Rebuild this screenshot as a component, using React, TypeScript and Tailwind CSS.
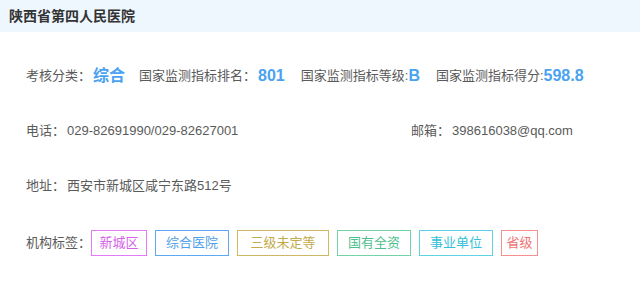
const tags = [
  { name: "新城区", w: "w-[56px]", cls: "border-[#e27cf4] text-[#d561e8]" },
  { name: "综合医院", w: "w-[74px]", cls: "border-[#5eaaf0] text-[#4f9fe9]" },
  { name: "三级未定等", w: "w-[92px]", cls: "border-[#cdb866] text-[#c2aa4c]" },
  { name: "国有全资", w: "w-[74px]", cls: "border-[#74d2a8] text-[#50bf8e]" },
  { name: "事业单位", w: "w-[74px]", cls: "border-[#62d2e6] text-[#33c0d8]" },
  { name: "省级", w: "w-[37px]", cls: "border-[#f39191] text-[#ef7474]" },
];

const App = () => {
  return (
    <div
      className="w-[640px] h-[289px] bg-white overflow-hidden"
      style={{ fontFamily: '"Liberation Sans", "Noto Sans CJK SC", sans-serif' }}
    >
      <div className="h-8 bg-[#eef6fe] flex items-center pl-[9px]">
        <span className="text-[14px] font-bold text-[#333]">陕西省第四人民医院</span>
      </div>

      <div className="pl-[26px] pt-[31px] flex flex-col gap-[29px] text-[13px] text-[#5a5a5a]">
        {/* 考核分类 */}
        <div className="h-[26px] flex items-center whitespace-nowrap">
          <span>考核分类：</span>
          <span className="ml-[2px] text-[16px] font-bold text-[#4aa2f1]">综合</span>
          <span className="ml-[14px]">国家监测指标排名：</span>
          <span className="ml-[2px] text-[16px] font-bold text-[#4aa2f1]">801</span>
          <span className="ml-[16px]">国家监测指标等级:</span>
          <span className="text-[16px] font-bold text-[#4aa2f1]">B</span>
          <span className="ml-[16px]">国家监测指标得分:</span>
          <span className="text-[16px] font-bold text-[#4aa2f1]">598.8</span>
        </div>

        {/* 联系方式 */}
        <div className="h-[26px] flex items-center whitespace-nowrap">
          <div className="w-[385px]">
            <span>电话：</span>
            <span className="ml-[2px]">029-82691990/029-82627001</span>
          </div>
          <div>
            <span>邮箱：</span>
            <span className="ml-[2px]">398616038@qq.com</span>
          </div>
        </div>

        {/* 地址 */}
        <div className="h-[26px] flex items-center whitespace-nowrap">
          <span>地址：</span>
          <span className="ml-[2px]">西安市新城区咸宁东路512号</span>
        </div>

        {/* 机构标签 */}
        <div className="h-[26px] mt-[2px] flex items-center whitespace-nowrap">
          <span>机构标签：</span>
          <div className="flex gap-2">
            {tags.map((t) => (
              <span
                key={t.name}
                className={`h-[26px] ${t.w} border flex items-center justify-center text-[13px] ${t.cls}`}
              >
                {t.name}
              </span>
            ))}
          </div>
        </div>
      </div>
    </div>
  );
};

export default App;
